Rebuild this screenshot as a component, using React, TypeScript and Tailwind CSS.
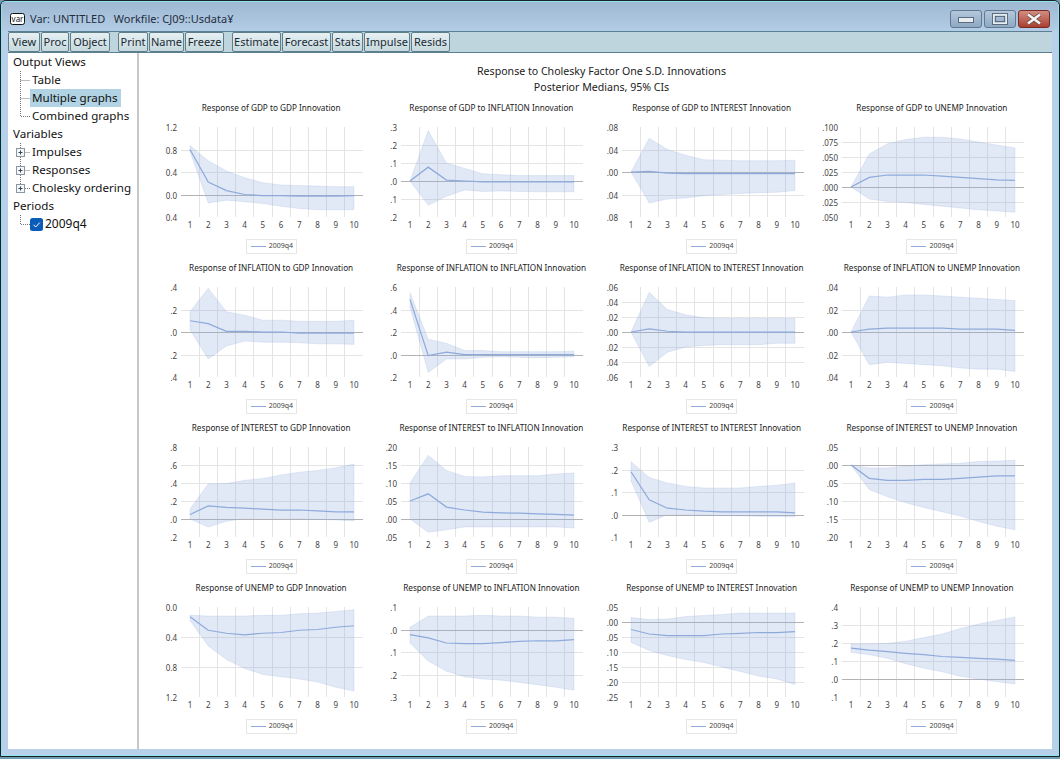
type Chart = {
  title: string
  labels: string[]
  top: number
  bottom: number
  upper: number[]
  median: number[]
  lower: number[]
}

const charts: Chart[] = [
  {
    title: 'Response of GDP to GDP Innovation',
    labels: ['1.2', '0.8', '0.4', '0.0', '0.4'],
    top: 1.2,
    bottom: -0.4,
    upper: [0.87, 0.6, 0.42, 0.3, 0.21, 0.17, 0.16, 0.15, 0.14, 0.14],
    median: [0.8, 0.22, 0.07, 0, -0.02, -0.02, -0.03, -0.03, -0.03, -0.02],
    lower: [0.76, -0.15, -0.1, -0.13, -0.16, -0.21, -0.25, -0.27, -0.27, -0.27],
  },
  {
    title: 'Response of GDP to INFLATION Innovation',
    labels: ['.3', '.2', '.1', '.0', '.1', '.2'],
    top: 0.3,
    bottom: -0.2,
    upper: [0, 0.28, 0.1, 0.07, 0.04, 0.035, 0.03, 0.03, 0.03, 0.03],
    median: [0, 0.077, 0.005, 0, -0.005, -0.005, -0.005, -0.005, -0.005, -0.005],
    lower: [0, -0.135, -0.085, -0.05, -0.058, -0.055, -0.058, -0.06, -0.06, -0.06],
  },
  {
    title: 'Response of GDP to INTEREST Innovation',
    labels: ['.08', '.04', '.00', '.04', '.08'],
    top: 0.08,
    bottom: -0.08,
    upper: [0, 0.06, 0.04, 0.03, 0.022, 0.021, 0.02, 0.02, 0.02, 0.021],
    median: [0, 0.001, -0.002, -0.003, -0.003, -0.003, -0.003, -0.003, -0.003, -0.003],
    lower: [0, -0.055, -0.048, -0.046, -0.042, -0.04, -0.038, -0.037, -0.036, -0.033],
  },
  {
    title: 'Response of GDP to UNEMP Innovation',
    labels: ['.100', '.075', '.050', '.025', '.000', '.025', '.050'],
    top: 0.1,
    bottom: -0.05,
    upper: [0, 0.055, 0.072, 0.079, 0.083, 0.083, 0.08, 0.075, 0.07, 0.065],
    median: [0, 0.016, 0.02, 0.02, 0.02, 0.018, 0.016, 0.014, 0.012, 0.011],
    lower: [0, -0.02, -0.024, -0.026, -0.029, -0.032, -0.035, -0.038, -0.04, -0.042],
  },
  {
    title: 'Response of INFLATION to GDP Innovation',
    labels: ['.4', '.2', '.0', '.2', '.4'],
    top: 0.4,
    bottom: -0.4,
    upper: [0.18, 0.39, 0.18, 0.15, 0.105, 0.105, 0.095, 0.095, 0.095, 0.105],
    median: [0.1, 0.075, 0.005, 0.005, 0, 0, -0.01, -0.01, -0.01, -0.01],
    lower: [0.02, -0.24, -0.125, -0.08, -0.09, -0.09, -0.095, -0.105, -0.105, -0.11],
  },
  {
    title: 'Response of INFLATION to INFLATION Innovation',
    labels: ['.6', '.4', '.2', '.0', '.2'],
    top: 0.6,
    bottom: -0.2,
    upper: [0.55, 0.135, 0.1, 0.035, 0.035, 0.025, 0.025, 0.025, 0.025, 0.03],
    median: [0.49, -0.01, 0.02, 0, 0, 0, 0, 0, 0, 0],
    lower: [0.42, -0.16, -0.04, -0.04, -0.025, -0.02, -0.025, -0.03, -0.025, -0.02],
  },
  {
    title: 'Response of INFLATION to INTEREST Innovation',
    labels: ['.06', '.04', '.02', '.00', '.02', '.04', '.06'],
    top: 0.06,
    bottom: -0.06,
    upper: [0, 0.053, 0.03, 0.023, 0.019, 0.018, 0.018, 0.018, 0.018, 0.018],
    median: [0, 0.004, 0.001, 0, 0, 0, 0, 0, 0, 0],
    lower: [0, -0.046, -0.027, -0.02, -0.018, -0.017, -0.017, -0.017, -0.015, -0.015],
  },
  {
    title: 'Response of INFLATION to UNEMP Innovation',
    labels: ['.04', '.02', '.00', '.02', '.04'],
    top: 0.04,
    bottom: -0.04,
    upper: [0, 0.032, 0.031, 0.033, 0.033, 0.032, 0.031, 0.03, 0.029, 0.028],
    median: [0, 0.0025, 0.0035, 0.0035, 0.0035, 0.0035, 0.0025, 0.0025, 0.0025, 0.0015],
    lower: [0, -0.029, -0.027, -0.028, -0.029, -0.03, -0.032, -0.033, -0.033, -0.035],
  },
  {
    title: 'Response of INTEREST to GDP Innovation',
    labels: ['.8', '.6', '.4', '.2', '.0', '.2'],
    top: 0.8,
    bottom: -0.2,
    upper: [0.11, 0.39, 0.395, 0.43, 0.45, 0.49, 0.52, 0.54, 0.57, 0.61],
    median: [0.05, 0.145, 0.13, 0.12, 0.11, 0.1, 0.1, 0.09, 0.08, 0.08],
    lower: [0, -0.09, -0.025, 0.005, 0.005, 0.005, 0, -0.005, -0.01, -0.02],
  },
  {
    title: 'Response of INTEREST to INFLATION Innovation',
    labels: ['.20', '.15', '.10', '.05', '.00', '.05'],
    top: 0.2,
    bottom: -0.05,
    upper: [0.1, 0.177, 0.135, 0.118, 0.117, 0.12, 0.12, 0.12, 0.125, 0.128],
    median: [0.05, 0.07, 0.033, 0.025, 0.019, 0.017, 0.016, 0.014, 0.013, 0.011],
    lower: [0, -0.037, -0.03, -0.022, -0.022, -0.022, -0.022, -0.022, -0.022, -0.025],
  },
  {
    title: 'Response of INTEREST to INTEREST Innovation',
    labels: ['.3', '.2', '.1', '.0', '.1'],
    top: 0.3,
    bottom: -0.1,
    upper: [0.235, 0.165, 0.14, 0.125, 0.118, 0.118, 0.118, 0.125, 0.13, 0.14],
    median: [0.19, 0.065, 0.028, 0.02, 0.015, 0.012, 0.012, 0.012, 0.012, 0.007],
    lower: [0.15, -0.035, 0, -0.002, -0.003, -0.005, -0.006, -0.008, -0.009, -0.01],
  },
  {
    title: 'Response of INTEREST to UNEMP Innovation',
    labels: ['.05', '.00', '.05', '.10', '.15', '.20'],
    top: 0.05,
    bottom: -0.2,
    upper: [0, -0.008, -0.008, -0.003, 0.001, 0.003, 0.005, 0.01, 0.011, 0.013],
    median: [0, -0.037, -0.043, -0.043, -0.04, -0.04, -0.037, -0.034, -0.03, -0.03],
    lower: [0, -0.068, -0.088, -0.105, -0.118, -0.13, -0.142, -0.157, -0.17, -0.18],
  },
  {
    title: 'Response of UNEMP to GDP Innovation',
    labels: ['0.0', '0.4', '0.8', '1.2'],
    top: 0,
    bottom: -1.2,
    upper: [-0.11, -0.12, -0.12, -0.12, -0.11, -0.11, -0.09, -0.08, -0.06, -0.035],
    median: [-0.13, -0.31, -0.35, -0.37, -0.35, -0.34, -0.31, -0.3, -0.27, -0.25],
    lower: [-0.18, -0.52, -0.7, -0.82, -0.9, -0.93, -0.96, -1, -1.07, -1.12],
  },
  {
    title: 'Response of UNEMP to INFLATION Innovation',
    labels: ['.1', '.0', '.1', '.2', '.3'],
    top: 0.1,
    bottom: -0.3,
    upper: [0.01, 0.06, 0.06, 0.06, 0.063, 0.06, 0.06, 0.055, 0.055, 0.05],
    median: [-0.023, -0.037, -0.06, -0.063, -0.063, -0.058, -0.053, -0.05, -0.05, -0.045],
    lower: [-0.06, -0.14, -0.185, -0.21, -0.22, -0.225, -0.235, -0.245, -0.257, -0.27],
  },
  {
    title: 'Response of UNEMP to INTEREST Innovation',
    labels: ['.05', '.00', '.05', '.10', '.15', '.20', '.25'],
    top: 0.05,
    bottom: -0.25,
    upper: [0.015, 0.008, 0.01, 0.018, 0.022, 0.025, 0.03, 0.03, 0.03, 0.03],
    median: [-0.025, -0.04, -0.045, -0.045, -0.045, -0.04, -0.038, -0.035, -0.035, -0.032],
    lower: [-0.068, -0.095, -0.112, -0.125, -0.135, -0.15, -0.165, -0.18, -0.19, -0.208],
  },
  {
    title: 'Response of UNEMP to UNEMP Innovation',
    labels: ['.4', '.3', '.2', '.1', '.0', '.1'],
    top: 0.4,
    bottom: -0.1,
    upper: [0.195, 0.195, 0.198, 0.21, 0.23, 0.25, 0.28, 0.305, 0.325, 0.345],
    median: [0.172, 0.16, 0.152, 0.143, 0.135, 0.125, 0.12, 0.115, 0.11, 0.103],
    lower: [0.148, 0.135, 0.115, 0.085, 0.06, 0.04, 0.015, 0, -0.015, -0.028],
  },
]

const toolbar = [
  [
    { label: 'View', width: 'w-[32px]' },
    { label: 'Proc', width: 'w-[28px]' },
    { label: 'Object', width: 'w-[40px]' },
  ],
  [
    { label: 'Print', width: 'w-[30px]' },
    { label: 'Name', width: 'w-[35px]' },
    { label: 'Freeze', width: 'w-[39px]' },
  ],
  [
    { label: 'Estimate', width: 'w-[49px]' },
    { label: 'Forecast', width: 'w-[49px]' },
    { label: 'Stats', width: 'w-[31px]' },
    { label: 'Impulse', width: 'w-[46px]' },
    { label: 'Resids', width: 'w-[39px]' },
  ],
]

// Plot box inside each chart's svg, in px.
const plotLeft = 20
const plotRight = 202
const plotTop = 11
const plotHeight = 90
const bandWidth = 18.22

function Plot({ chart }: { chart: Chart }) {
  const x = (i: number) => plotLeft + 9 + i * bandWidth
  const y = (v: number) => plotTop + ((chart.top - v) / (chart.top - chart.bottom)) * plotHeight
  const step = (chart.top - chart.bottom) / (chart.labels.length - 1)
  const upper = chart.upper.map((v, i) => `${x(i)},${y(v)}`)
  const lower = chart.lower.map((v, i) => `${x(i)},${y(v)}`).reverse()

  return (
    <svg width="220" height="123" className="block">
      {Array.from({ length: 9 }, (_, i) => {
        const lineX = Math.floor(plotLeft + (i + 1) * bandWidth) + 0.5
        return <line key={i} x1={lineX} x2={lineX} y1={plotTop} y2={plotTop + plotHeight} stroke="#e4e4e4" />
      })}
      {chart.labels.map((label, i) => {
        const v = chart.top - i * step
        const lineY = Math.round(y(v)) + 0.5
        const isZero = Math.abs(v) < 1e-9
        return (
          <g key={i}>
            {i > 0 && i < chart.labels.length - 1 && (
              <line x1={plotLeft} x2={plotRight} y1={lineY} y2={lineY} stroke={isZero ? '#b2b2b2' : '#e4e4e4'} />
            )}
            <text x="16" y={lineY + 3} textAnchor="end" fontSize="8" fill="#3f3f3f">
              {label}
            </text>
          </g>
        )
      })}
      <polygon
        points={[...upper, ...lower].join(' ')}
        fill="#8faadc"
        fillOpacity="0.27"
        stroke="#8faadc"
        strokeOpacity="0.2"
      />
      <polyline
        points={chart.median.map((v, i) => `${x(i)},${y(v)}`).join(' ')}
        fill="none"
        stroke="#8eaadb"
        strokeWidth="1.25"
      />
      {chart.median.map((_, i) => (
        <text key={i} x={x(i)} y="112" textAnchor="middle" fontSize="8" fill="#3f3f3f">
          {i + 1}
        </text>
      ))}
    </svg>
  )
}

function ChartCell({ chart }: { chart: Chart }) {
  return (
    <div className="flex h-[160px] flex-col items-center">
      <div className="h-[16px] whitespace-nowrap text-[8.2px] leading-[16px] text-[#222]">{chart.title}</div>
      <Plot chart={chart} />
      <div className="flex h-[15px] w-[51px] items-center gap-[3px] border border-[#e6e6e6] pl-[4px] text-[7px] text-[#444]">
        <span className="h-px w-[15px] bg-[#8eaadb]" />
        2009q4
      </div>
    </div>
  )
}

// Dotted tree connector, optionally with the [+] expander box.
function TreeGlyph({ expander, last }: { expander?: boolean; last?: boolean }) {
  return (
    <svg width="20" height="18" className="shrink-0">
      <path
        d={last ? 'M8.5 0V9.5H18' : 'M8.5 0V18M8.5 9.5H18'}
        fill="none"
        stroke="#777"
        strokeDasharray="1 1"
      />
      {expander && (
        <>
          <rect x="4.5" y="5.5" width="8" height="8" fill="#f4f6f8" stroke="#8a97a3" />
          <path d="M6.5 9.5h4M8.5 7.5v4" stroke="#33465a" />
        </>
      )}
    </svg>
  )
}

function Heading({ children }: { children: string }) {
  return <div className="h-[18px] pl-[5px] leading-[18px]">{children}</div>
}

function TreeRow({ label, expander, last, active }: { label: string; expander?: boolean; last?: boolean; active?: boolean }) {
  return (
    <div className="flex h-[18px] items-center pl-[4px] leading-[18px]">
      <TreeGlyph expander={expander} last={last} />
      <span className={active ? 'ml-[-2px] bg-[#b1d3e3] pl-[2px] pr-[3px]' : ''}>{label}</span>
    </div>
  )
}

function WindowButtons() {
  return (
    <div className="flex gap-[2px]">
      <div className="flex h-[18px] w-[32px] items-center justify-center rounded-[3px] border border-[#62788f] bg-linear-to-b from-[#b4c8dc] to-[#8ea8c4]">
        <svg width="16" height="10">
          <rect x="0.5" y="3.5" width="15" height="5" fill="#e8edf2" stroke="#5d6c7c" />
        </svg>
      </div>
      <div className="flex h-[18px] w-[32px] items-center justify-center rounded-[3px] border border-[#62788f] bg-linear-to-b from-[#b4c8dc] to-[#8ea8c4]">
        <svg width="16" height="12">
          <rect x="1" y="1" width="14" height="10" fill="none" stroke="#e8edf2" strokeWidth="3" />
          <rect x="0.5" y="0.5" width="15" height="11" fill="none" stroke="#5d6c7c" />
          <rect x="3.5" y="3.5" width="9" height="5" fill="none" stroke="#5d6c7c" />
        </svg>
      </div>
      <div className="flex h-[18px] w-[32px] items-center justify-center rounded-[3px] border border-[#7a2a25] bg-linear-to-b from-[#d28d82] to-[#a83f31]">
        <svg width="18" height="12">
          <path d="M3 1.5l12 9M15 1.5l-12 9" stroke="#5d4a48" strokeWidth="4" />
          <path d="M3 1.5l12 9M15 1.5l-12 9" stroke="#f4f4f4" strokeWidth="2.6" />
        </svg>
      </div>
    </div>
  )
}

export default function App() {
  return (
    <div className="h-[759px] w-[1060px] overflow-hidden bg-[#6f9db0] font-['Noto_Sans',sans-serif]">
      <div className="h-[757px] rounded-t-[6px] border border-[#1a2128]">
        <div className="flex h-full flex-col rounded-t-[5px] border border-[#8fe3ee] bg-[#b9d0ea]">
          <div className="flex h-[29px] shrink-0 items-center justify-between bg-linear-to-b from-[#9eb8d2] to-[#b4cde6] pl-[8px] pr-[8px] pt-[5px]">
            <div className="flex items-center gap-[5px] text-[11px] text-[#1f2d3d]">
              <svg width="15" height="12">
                <rect x="0.5" y="0.5" width="14" height="11" rx="2" fill="#fff" stroke="#111" />
                <text x="7.5" y="8.5" textAnchor="middle" fontSize="8" fill="#111">var</text>
              </svg>
              <span className="whitespace-pre">Var: UNTITLED   Workfile: CJ09::Usdata¥</span>
            </div>
            <WindowButtons />
          </div>

          <div className="mx-[6px] flex h-[22px] shrink-0 gap-[8px] border-y border-[#5a7f92] bg-[#bfd5dd]">
            {toolbar.map((group, i) => (
              <div key={i} className="flex gap-px">
                {group.map((button) => (
                  <div
                    key={button.label}
                    className={`${button.width} rounded-[2px] border border-[#5f7f8a] bg-linear-to-b from-[#e6f0f2] to-[#c6d8de] text-center text-[11px] leading-[18px] text-[#1a2a33]`}
                  >
                    {button.label}
                  </div>
                ))}
              </div>
            ))}
          </div>

          <div className="mx-[6px] mb-[6px] flex min-h-0 flex-1 bg-white">
            <div className="w-[131px] shrink-0 border-r-2 border-[#c8c8c8] text-[11.6px] text-[#111]">
              <Heading>Output Views</Heading>
              <TreeRow label="Table" />
              <TreeRow label="Multiple graphs" active />
              <TreeRow label="Combined graphs" last />
              <Heading>Variables</Heading>
              <TreeRow label="Impulses" expander />
              <TreeRow label="Responses" expander />
              <TreeRow label="Cholesky ordering" expander last />
              <Heading>Periods</Heading>
              <div className="flex h-[18px] items-center pl-[4px] text-[12px]">
                <TreeGlyph last />
                <svg width="13" height="13" className="ml-[-2px] mr-[2px] shrink-0">
                  <rect width="13" height="13" rx="2.5" fill="#0b5cb8" />
                  <path d="M3.5 6.8l2.2 2.2 4-4.4" fill="none" stroke="#fff" />
                </svg>
                2009q4
              </div>
            </div>

            <div className="min-w-0 flex-1 pl-[22px]">
              <div className="h-[47px] w-[881px] pt-[10px] text-center text-[10.6px] leading-[16px] text-[#222]">
                <div>Response to Cholesky Factor One S.D. Innovations</div>
                <div>Posterior Medians, 95% CIs</div>
              </div>
              <div className="grid w-[881px] grid-cols-4">
                {charts.map((chart) => (
                  <ChartCell key={chart.title} chart={chart} />
                ))}
              </div>
            </div>
          </div>
        </div>
      </div>
    </div>
  )
}
